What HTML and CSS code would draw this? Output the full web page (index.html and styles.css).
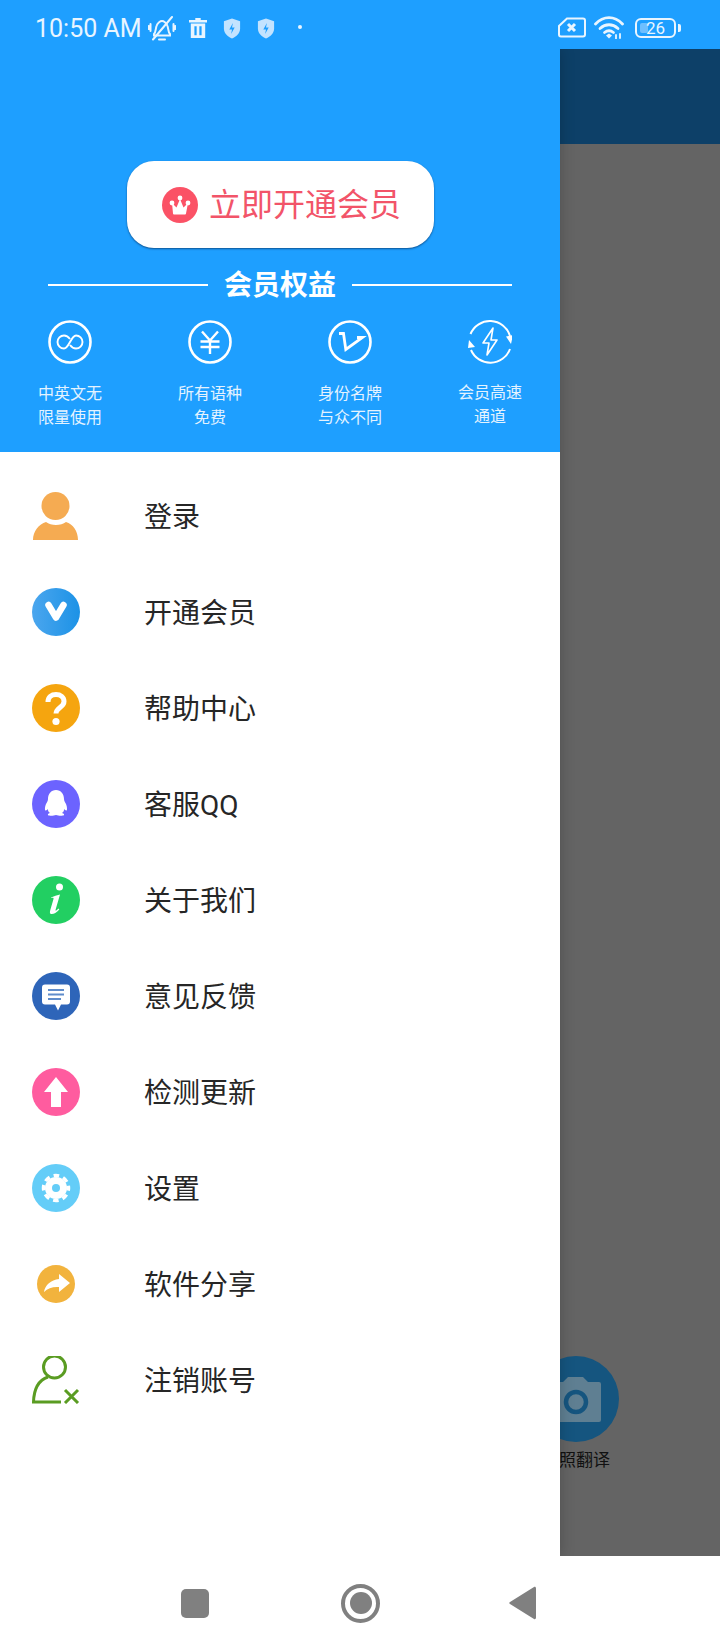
FILE: index.html
```html
<!DOCTYPE html>
<html lang="zh">
<head>
<meta charset="utf-8">
<title>会员</title>
<link rel="stylesheet" href="styles.css">
</head>
<body>
<div class="screen">
  <header class="statusbar">
    <span class="time">10:50 AM</span>
    <svg class="si si-bell" viewBox="0 0 28 25" fill="none" stroke="currentColor" stroke-width="2" stroke-linecap="round"><path d="M6 18c2-2 1.500-5 2.500-8 1-3.500 4-5 5.500-5s4.500 1.500 5.500 5c1 3 .5 6 2.500 8v1.500H6z"/><path d="M11 23.500h6"/><path d="M24 1 5 23.500"/><path d="M2.500 8v7M.8 10v3M25.500 8v7M27.200 10v3"/></svg>
    <svg class="si si-trash" viewBox="0 0 20 22" fill="currentColor"><path d="M7 0h6v2h7v3H0V2h7zM2 6h16v16H2zM6 9v10h2.500V9zm5.500 0v10H14V9z" fill-rule="evenodd"/></svg>
    <svg class="si si-shield" viewBox="0 0 20 22"><path class="shield" d="M10 0l9 3v8c0 5-4 9-9 11-5-2-9-6-9-11V3z"/><path class="bolt" d="M11 5 7 12h3l-1 5 4-7h-3z"/></svg>
    <svg class="si si-shield" viewBox="0 0 20 22"><path class="shield" d="M10 0l9 3v8c0 5-4 9-9 11-5-2-9-6-9-11V3z"/><path class="bolt" d="M11 5 7 12h3l-1 5 4-7h-3z"/></svg>
    <span class="dot"></span>
    <span class="status-gap"></span>
    <svg class="si si-sim" viewBox="0 0 28 21" fill="none" stroke="currentColor" stroke-width="2"><path d="M9 1.500h16c1 0 2 1 2 2v14c0 1-1 2-2 2H3c-1 0-2-1-2-2V9z"/><path d="M10 7l7 7M17 7l-7 7" stroke-width="3"/></svg>
    <svg class="si si-wifi" viewBox="0 0 30 23" fill="none" stroke="currentColor" stroke-width="2.800" stroke-linecap="round"><path d="M1.500 8c8-8.500 19-8.500 27 0"/><path d="M6 12.500c5.500-5 12.500-5 18 0"/><path d="M10.500 16.500c3-2.300 6-2.300 9 0"/><path d="M12 19.500l3-2 3 2-3 3z" fill="currentColor" stroke="none"/><path d="M22 19v3.500M26 18v4" stroke-width="1.800"/></svg>
    <div class="battery"><span class="battery-body"><span class="battery-fill"></span><span class="battery-num">26</span></span><span class="battery-tip"></span></div>
  </header>

  <div class="content">
    <aside class="drawer">
      <section class="drawer-head">
        <button class="vip-btn">
          <svg class="crown" viewBox="0 0 36 36"><circle cx="18" cy="18" r="18" fill="#fb5266"/><path d="M10 16l4.500 4.500L18 12l3.500 8.500L26 16l-2 10.500q0 1-1 1H12q-1 0-1-1z" fill="#fff"/><circle cx="18" cy="11" r="2.400" fill="#fff"/><circle cx="10" cy="16" r="2.400" fill="#fff"/><circle cx="26" cy="16" r="2.400" fill="#fff"/></svg>
          <span class="vip-text">立即开通会员</span>
        </button>
        <div class="rights-title"><span class="rule"></span><strong>会员权益</strong><span class="rule"></span></div>
        <div class="benefits">
          <div class="benefit">
            <svg viewBox="0 0 44 44" fill="none" stroke="#fff"><circle cx="22" cy="22" r="20.500" stroke-width="2.600"/><path d="M22 19c-1.500-2-3.500-3.500-6-3.500a6.500 6.500 0 0 0 0 13c5 0 7-13 12-13a6.500 6.500 0 0 1 0 13c-2.500 0-4.500-1.500-6-3.500" stroke-width="1.900"/></svg>
            <p>中英文无<br>限量使用</p>
          </div>
          <div class="benefit">
            <svg viewBox="0 0 44 44" fill="none" stroke="#fff"><circle cx="22" cy="22" r="20.500" stroke-width="2.600"/><path d="M14 11.500l8 9 8-9M12.500 21.500h19M12.500 27h19M22 21v13" stroke-width="2.400"/></svg>
            <p>所有语种<br>免费</p>
          </div>
          <div class="benefit">
            <svg viewBox="0 0 44 44" fill="none" stroke="#fff"><circle cx="22" cy="22" r="20.500" stroke-width="2.600"/><path d="M11 13.500h4.500L17.800 29.500 34.500 17.500H29" stroke-width="2.800" stroke-linejoin="miter"/></svg>
            <p>身份名牌<br>与众不同</p>
          </div>
          <div class="benefit raised">
            <svg viewBox="0 0 44 44" fill="none" stroke="#fff"><path d="M2.500 14A21 21 0 0 1 42 16" stroke-width="2"/><path d="M42 29A21 21 0 0 1 3 30" stroke-width="2"/><path d="M38 16.500l7-1.500-2 9zM1 20l6 7-7 1z" fill="#fff" stroke="none"/><path d="M25 8 15 23h6l-2 12 10-15h-6z" stroke-width="1.600" stroke-linejoin="round"/></svg>
            <p>会员高速<br>通道</p>
          </div>
        </div>
      </section>

      <nav class="menu">
        <a class="menu-item"><svg viewBox="0 0 48 48"><circle cx="23.500" cy="14" r="14" fill="#f5ab52"/><path d="M1 48c0-9 6-16 13-18 5 4 15 4 20 0 7 2 12 9 12 18z" fill="#f5ab52"/></svg><span>登录</span></a>
        <a class="menu-item"><svg viewBox="0 0 48 48"><defs><linearGradient id="blueGrad"><stop offset="0" stop-color="#4ba6ee"/><stop offset="1" stop-color="#1c92e6"/></linearGradient></defs><circle cx="24" cy="24" r="24" fill="url(#blueGrad)"/><path d="M16.500 17l7.500 12.500L31.500 17" fill="none" stroke="#fff" stroke-width="6.500" stroke-linecap="round" stroke-linejoin="round"/></svg><span>开通会员</span></a>
        <a class="menu-item"><svg viewBox="0 0 48 48"><circle cx="24" cy="24" r="24" fill="#f5a50f"/><path d="M16 18c0-5 3.500-7.500 8-7.500s8 2.500 8 7c0 6-8 6-8 12" fill="none" stroke="#fff" stroke-width="5"/><circle cx="24" cy="37.500" r="3.600" fill="#fff"/></svg><span>帮助中心</span></a>
        <a class="menu-item"><svg viewBox="0 0 48 48"><circle cx="24" cy="24" r="24" fill="#6c63ff"/><path d="M24 10c5 0 8 4 8 9 0 2 1 3 2 5 1.300 3 1.300 6.500.5 6.500-1 .3-1.700-1-2.200-1.500-.3 2-1 3-2.300 4 2 .5 2.500 1.500 1.800 2.300-1 .7-5.500.7-7.800-.3-2.300 1-6.800 1-7.800.3-.7-.8-.2-1.800 1.800-2.300-1.300-1-2-2-2.300-4-.5.5-1.200 1.800-2.200 1.500-.8 0-.8-3.500.5-6.500 1-2 2-3 2-5 0-5 3-9 8-9z" fill="#fff"/></svg><span>客服<span class="latin">QQ</span></span></a>
        <a class="menu-item"><svg viewBox="0 0 48 48"><circle cx="24" cy="24" r="24" fill="#22cf62"/><circle cx="27.500" cy="11" r="3.500" fill="#fff"/><path d="M19 21.500c3-1.500 6-2.500 9-3l-4.500 15.500c-.3 1 .5 1 3-1.500l.8 1c-3 3.500-6.300 5-8.300 4.500-1.500-.5-1.200-2-.7-4l3.200-11c.3-1.500-.5-1.500-2-1z" fill="#fff"/></svg><span>关于我们</span></a>
        <a class="menu-item"><svg viewBox="0 0 48 48"><circle cx="24" cy="24" r="24" fill="#2e65b9"/><path d="M13 12.500h22a3 3 0 0 1 3 3v14a3 3 0 0 1-3 3h-6l-3 6-3-6H13a3 3 0 0 1-3-3v-14a3 3 0 0 1 3-3z" fill="#fff"/><path d="M16 18h16M16 22.500h16M16 27h13" stroke="#5f8ccb" stroke-width="2"/></svg><span>意见反馈</span></a>
        <a class="menu-item"><svg viewBox="0 0 48 48"><circle cx="24" cy="24" r="24" fill="#ff5c9f"/><path d="M24 9l12 15h-7v15H19V24h-7z" fill="#fff"/></svg><span>检测更新</span></a>
        <a class="menu-item"><svg viewBox="0 0 48 48"><circle cx="24" cy="24" r="24" fill="#64cdf8"/><circle cx="24" cy="24" r="11" fill="#fff"/><circle cx="24" cy="24" r="12.500" fill="none" stroke="#fff" stroke-width="3.500" stroke-dasharray="5.600 4.220" stroke-dashoffset="2.800"/><circle cx="24" cy="24" r="4" fill="#64cdf8"/></svg><span>设置</span></a>
        <a class="menu-item"><svg viewBox="0 0 48 48"><circle cx="24" cy="24" r="19" fill="#f2b33d"/><path d="M27 14l11 9-11 9v-5c-6-.5-11 1-15 5 1-7 7-12 15-13z" fill="#fff"/></svg><span>软件分享</span></a>
        <a class="menu-item"><svg viewBox="0 0 48 48" fill="none" stroke="#5a9c22" stroke-width="3"><circle cx="22.500" cy="11" r="11"/><path d="M16 21C7 24 2 31 1.500 46H29"/><path d="M33 34l13 13M46 34 33 47"/></svg><span>注销账号</span></a>
      </nav>
    </aside>

    <div class="backdrop">
      <div class="appbar"></div>
      <div class="dim">
        <div class="camera">
          <span class="camera-disc">
            <svg viewBox="0 0 86 86"><path d="M18 26h12l5-5h15l5 5h11a2 2 0 0 1 2 2v36a2 2 0 0 1-2 2H18z" fill="#5f7f92"/><circle cx="43" cy="46" r="10" fill="none" stroke="#15557f" stroke-width="4.500"/></svg>
          </span>
          <span class="camera-label">拍照翻译</span>
        </div>
      </div>
    </div>
  </div>

  <footer class="navbar">
    <span class="nav-square"></span>
    <span class="nav-home"><span></span></span>
    <svg class="nav-back" viewBox="0 0 27 34"><path d="M25 1c1-.5 2 0 2 1.500v29c0 1.500-1 2-2 1.500L1 18c-1-.5-1-1.500 0-2z" fill="#808080"/></svg>
  </footer>
</div>
</body>
</html>
```

FILE: styles.css
```css
* { box-sizing: border-box; }
html, body { margin: 0; padding: 0; }
body { font-family: "Noto Sans CJK SC", "Noto Sans", sans-serif; background: #fff; }

.screen { width: 720px; height: 1650px; display: flex; flex-direction: column; overflow: hidden; }

.statusbar {
  height: 49px; flex: none; background: #1e9fff; color: #e9f5ff;
  display: flex; align-items: center; padding: 7px 0 0 35px; position: relative; z-index: 3;
}
.time { font: 25px/30px Roboto, sans-serif; width: 106px; white-space: nowrap; padding-top: 1px; height: 31px; }
.si { display: block; flex: none; }
.si-bell { width: 28px; height: 25px; margin-left: 7px; }
.si-trash { width: 18px; height: 20px; margin-left: 13px; }
.si-shield { width: 18px; height: 21px; margin-left: 16px; }
.shield { fill: #c3e3ff; }
.bolt { fill: #1e9fff; }
.dot { width: 4px; height: 4px; border-radius: 50%; background: #e9f5ff; margin-left: 23px; flex: none; margin-top: -2px; }
.status-gap { flex: 1; }
.si-sim { width: 28px; height: 21px; margin-top: -1px; }
.si-wifi { width: 30px; height: 23px; margin-left: 8px; margin-top: -1px; }
.battery { display: flex; align-items: center; margin-left: 11px; margin-right: 39px; margin-top: -1px; }
.battery-body { width: 41px; height: 20px; border: 2px solid #e9f5ff; border-radius: 6px; position: relative; display: flex; align-items: center; justify-content: center; }
.battery-fill { position: absolute; left: 3px; top: 3px; bottom: 3px; width: 8px; background: #6ebfff; border-radius: 2px; }
.battery-num { position: relative; font: 17px/16px Roboto, sans-serif; }
.battery-tip { width: 3px; height: 8px; background: #e9f5ff; border-radius: 0 2px 2px 0; margin-left: 2px; }

.content { flex: 1; display: flex; min-height: 0; }

.drawer { width: 560px; flex: none; background: #fff; position: relative; z-index: 2; box-shadow: 0 0 14px rgba(0,0,0,.22); }
.drawer-head { height: 403px; background: #1e9fff; padding-top: 112px; display: flex; flex-direction: column; align-items: center; }

.vip-btn {
  width: 307px; height: 87px; margin: 0 0 0 1px; padding: 0 0 0 35px; border: 0; border-radius: 27px; background: #fff;
  display: flex; align-items: center; gap: 11px; font: 32px/40px "Noto Sans CJK SC", sans-serif; color: #f25469;
  box-shadow: 0 1px 2px rgba(0,30,70,.6);
}
.vip-text { padding-bottom: 5px; }
.crown { width: 36px; height: 36px; flex: none; }

.rights-title { width: 100%; padding: 0 48px; margin-top: 17px; display: flex; align-items: center; gap: 16px; height: 40px; color: #fff; }
.rights-title strong { font-size: 28px; line-height: 40px; font-weight: 700; white-space: nowrap; padding-bottom: 4px; height: 44px; }
.rule { flex: 1; height: 2px; background: #fff; }

.benefits { width: 100%; display: grid; grid-template-columns: repeat(4, 1fr); margin-top: 15px; }
.benefit { display: flex; flex-direction: column; align-items: center; color: #e4f3ff; }
.benefit svg { width: 44px; height: 44px; display: block; }
.benefit p { margin: 16px 0 0; font-size: 16px; line-height: 24px; text-align: center; }
.benefit.raised p { margin-top: 15px; }

.menu { padding-top: 16px; }
.menu-item { height: 96px; display: flex; align-items: center; padding-left: 32px; gap: 64px; color: #262626; font: 28px/40px Roboto, "Noto Sans CJK SC", sans-serif; }
.menu-item > span { padding-top: 4px; }
.menu-item svg { width: 48px; height: 48px; flex: none; display: block; }
.latin { font-weight: 450; }

.backdrop { flex: 1; display: flex; flex-direction: column; min-width: 0; }
.appbar { height: 95px; background: #0d4068; flex: none; }
.dim { flex: 1; background: #646464; position: relative; }
.camera { position: absolute; left: -61px; top: 1212px; width: 154px; display: flex; flex-direction: column; align-items: center; }
.camera-disc { width: 86px; height: 86px; border-radius: 50%; background: #15557f; display: block; }
.camera-disc svg { width: 86px; height: 86px; display: block; }
.camera-label { font-size: 17px; line-height: 24px; margin-top: 5px; color: #111; white-space: nowrap; }

.navbar { height: 94px; flex: none; background: #fff; display: flex; align-items: center; padding: 0 0 0 181px; position: relative; z-index: 3; }
.nav-square { width: 28px; height: 29px; border-radius: 5px; background: #808080; }
.nav-home { width: 39px; height: 39px; border: 4px solid #808080; border-radius: 50%; margin-left: 132px; display: flex; align-items: center; justify-content: center; }
.nav-home span { width: 22px; height: 22px; border-radius: 50%; background: #808080; }
.nav-back { width: 27px; height: 34px; margin-left: 129px; display: block; }
```
